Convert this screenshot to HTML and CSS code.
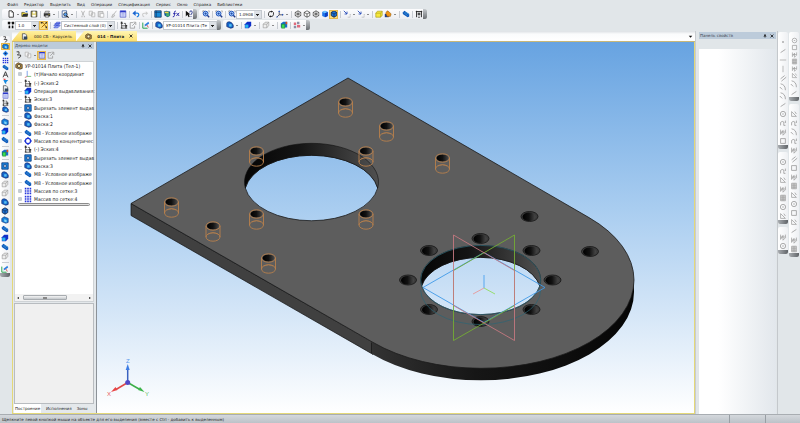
FILE: index.html
```html
<!DOCTYPE html>
<html lang="ru">

<head>
    <meta charset="UTF-8">
    <meta name="viewport" content="width=device-width, initial-scale=1.0">
    <title>014 - Плита</title>
    <link rel="stylesheet" href="styles.css">
</head>

<body>
    <!-- icon sprite -->
    <svg class="sprite" aria-hidden="true">
        <symbol id="new" viewBox="0 0 10 10"><path d="M2.5 1h3.5l2 2v6h-5.5z" fill="#fff" stroke="#222"/><path d="M6 1v2h2" fill="none" stroke="#222" stroke-width=".6"/></symbol>
        <symbol id="open" viewBox="0 0 10 10"><path d="M1 8V3h3l1 1h3v4z" fill="#e8d23c" stroke="#4a4a20" stroke-width=".8"/><path d="M1 8l2-3h6L7.500 8z" fill="#2c3038"/><path d="M5 2l3-1v2z" fill="#2a6fd0"/></symbol>
        <symbol id="save" viewBox="0 0 10 10"><path d="M1.500 1.500h7v7h-7z" fill="#d9c964" stroke="#222"/><path d="M3.500 2h3v2.500h-3zM3 6h4v2.500H3z" fill="#fff"/></symbol>
        <symbol id="print" viewBox="0 0 10 10"><path d="M1 4h8v4H1z" fill="#333"/><path d="M3 1.500h5L7 4H2zM3 6.500h4V9H3z" fill="#ddd" stroke="#333" stroke-width=".6"/><path d="M7 5h1v1H7z" fill="#d8c820"/></symbol>
        <symbol id="preview" viewBox="0 0 10 10"><path d="M1.500 1h5.500v8H1.500z" fill="#fff" stroke="#234a90" stroke-width=".9"/><path d="M6.500 7l3 2.500" stroke="#111" stroke-width="1.300"/><circle cx="5.500" cy="5.500" r="2.200" fill="#58a0f0" stroke="#111" stroke-width=".8"/></symbol>
        <symbol id="cut" viewBox="0 0 10 10"><path d="M3 1l3 6M7 1L4 7" stroke="#aaa" fill="none"/><path d="M3 7.500h1.500v1.500H3zM6 7.500h1.500v1.500H6z" fill="#bbb"/></symbol>
        <symbol id="copy" viewBox="0 0 10 10"><path d="M1.500 1.500h4v5h-4zM4.500 3.500h4v5h-4z" fill="#f5f5f5" stroke="#b0b0b0" stroke-width=".9"/></symbol>
        <symbol id="paste" viewBox="0 0 10 10"><path d="M1.500 2h6v6.500h-6z" fill="#ddd" stroke="#aaa"/><path d="M4 4.500h4.500V9H4z" fill="#fff" stroke="#aaa" stroke-width=".8"/></symbol>
        <symbol id="brush" viewBox="0 0 10 10"><path d="M8 1L5 5M2 9l2-4 2 1.500-2 2.500z" stroke="#b0b0b0" fill="#ddd"/></symbol>
        <symbol id="props" viewBox="0 0 10 10"><path d="M1.500 1h7v8h-7z" fill="#e6ecff" stroke="#3a45c0" stroke-width=".8"/><path d="M1.500 1h7v2h-7z" fill="#2b37c8"/><path d="M3 4.500h4M3 6h4M3 7.500h4" stroke="#6672d8" stroke-width=".6"/></symbol>
        <symbol id="undo" viewBox="0 0 10 10"><path d="M3 4h3.500q2 0 2 2t-2.500 2.500" fill="none" stroke="#1f7fe0" stroke-width="1.600"/><path d="M.5 4l4-3.500v7z" fill="#1a63d0"/></symbol>
        <symbol id="redo" viewBox="0 0 10 10"><path d="M7 4H4Q2 4 2 6t2 2.500" fill="none" stroke="#ccc" stroke-width="1.300"/><path d="M9 4L6 1.500v5z" fill="#ccc"/></symbol>
        <symbol id="cell" viewBox="0 0 10 10"><path d="M1 1h8v8H1z" fill="#1785e0" stroke="#123a7c"/><path d="M3.500 3.500h3v3h-3z" fill="#fff" stroke="#123a7c"/></symbol>
        <symbol id="lib" viewBox="0 0 10 10"><path d="M1 1h8v8H1z" fill="#1689d8" stroke="#1d355e"/><path d="M1 3h8M3 1v8" stroke="#113c70" stroke-width=".8"/></symbol>
        <symbol id="vars" viewBox="0 0 10 10"><path d="M1 2l3-1 5 1v5L6 9 2 7z" fill="#165a9a"/><path d="M4 4h4v4H4z" fill="#45b06a"/><path d="M2 2h5v2H2z" fill="#ead64a"/></symbol>
        <symbol id="fx" viewBox="0 0 10 10"><path d="M5 1.500H4Q3 1.500 3 3v4q0 1.500-2 1.500M1.500 4.500h3M5.500 3.500l3.500 4M9 3.500L5.500 7.500" fill="none" stroke="#2a2aa8" stroke-width="1.200"/></symbol>
        <symbol id="help" viewBox="0 0 10 10"><path d="M1 1v7l2-2 1.500 3L6 8 4.500 5.500H7z" fill="#111"/><path d="M6 3q0-2 1.500-2T9 3 7.500 5v1M7.500 7.500v1" fill="none" stroke="#2b3a90" stroke-width="1.200"/></symbol>
        <symbol id="zoom" viewBox="0 0 10 10"><path d="M1 3V1h2M8 1h1v2" fill="none" stroke="#555" stroke-width=".6"/><path d="M6 6l3 3" stroke="#223a86" stroke-width="1.800"/><circle cx="4.500" cy="4.500" r="3" fill="#9ccaff" stroke="#2454b8" stroke-width="1.200"/><path d="M3 4.500h3M4.500 3v3" stroke="#1b3b9b" stroke-width=".9"/></symbol>
        <symbol id="refresh" viewBox="0 0 10 10"><path d="M3.500 8.500Q1 7 2 4t3-2M6.500 1.500Q9 3 8 6T5 8" fill="none" stroke="#222" stroke-width="1.100"/><path d="M5 .5v3l2-1.500zM5 6.500v3L3 8z" fill="#222"/></symbol>
        <symbol id="axes" viewBox="0 0 10 10"><path d="M4 1v5L1 9M4 6h5" fill="none" stroke="#223" stroke-width=".9"/><path d="M4 .5l1.200 2H2.800zM9.500 6l-2-1.200v2.400zM.5 9.500l.5-2 1.500 1.500z" fill="#2455c0"/></symbol>
        <symbol id="wire" viewBox="0 0 10 10"><path d="M5 1l3.500 2v4L5 9 1.500 7V3zM1.500 3L5 5l3.500-2M5 5v4" fill="#fff" stroke="#222" stroke-width=".8"/></symbol>
        <symbol id="wirefull" viewBox="0 0 10 10"><path d="M5 1l3.500 2v4L5 9 1.500 7V3zM1.500 3L5 5l3.500-2M5 5v4M5 1v4L1.500 7M5 5l3.500 2" fill="#fff" stroke="#222" stroke-width=".7"/></symbol>
        <symbol id="solid" viewBox="0 0 10 10"><path d="M5 1l3.500 1.500v5L5 9 1.500 7.500v-5z" fill="#1d74ea"/><path d="M1.500 2.500L5 1l3.500 1.500L5 4z" fill="#6fc4ff"/><path d="M5 4l3.500-1.500v5L5 9z" fill="#0d3fc0"/></symbol>
        <symbol id="solidline" viewBox="0 0 10 10"><path d="M5 1l3.500 2v4L5 9 1.500 7V3z" fill="#1d74d8" stroke="#102248"/><path d="M1.500 3L5 5l3.500-2M5 5v4" fill="none" stroke="#102248" stroke-width=".8"/></symbol>
        <symbol id="part" viewBox="0 0 10 10"><path d="M1 3l3-2 5 2v5L6 9 1 7z" fill="#1580dc" stroke="#103078" stroke-width=".8"/><path d="M4 4l3 1v3L4 7z" fill="#7fd4f8"/></symbol>
        <symbol id="round" viewBox="0 0 10 10"><path d="M1 3q0-2 3-2t5 4v3L6 9 1 7z" fill="#1566cc" stroke="#10296c" stroke-width=".9"/><path d="M4 4h3v3H4z" fill="#58c4f2"/></symbol>
        <symbol id="extrude" viewBox="0 0 10 10"><path d="M1 4l3-3h5v5L6 9H1z" fill="#0f2fc8"/><path d="M1.500 4.500h4v4h-4z" fill="#29b6ee"/></symbol>
        <symbol id="thread" viewBox="0 0 10 10"><path d="M1 3l2-2 6 4v3L7 9 1 5z" fill="#0d56b8"/><path d="M2 3l5 4M4 2.500l4.500 3" stroke="#48a8e8" stroke-width=".8"/></symbol>
        <symbol id="ring" viewBox="0 0 10 10"><circle cx="5" cy="5" r="3.200" fill="none" stroke="#1d32d8" stroke-width="1.500"/><path d="M5 0v2M5 8v2M0 5h2M8 5h2" stroke="#1d32d8" stroke-width="1.300"/></symbol>
        <symbol id="grid" viewBox="0 0 10 10"><path d="M1 2h8M1 5h8M1 8h8" stroke="#2434dc" stroke-width="2" stroke-dasharray="2 1"/></symbol>
        <symbol id="sketch" viewBox="0 0 10 10"><path d="M2 1v8h7M1 3h3M5 3h2v6M2 6h6v3" fill="none" stroke="#333" stroke-width=".9"/><path d="M1 1h2v2H1zM1 8h2v1.500H1zM7 5h2v2H7z" fill="#333"/></symbol>
        <symbol id="origin" viewBox="0 0 10 10"><path d="M4 1v7" stroke="#3a70e0" stroke-width=".8"/><path d="M4 8h5" stroke="#3ba63b" stroke-width=".8"/><path d="M4 8L1 9.500" stroke="#d04040" stroke-width=".8"/></symbol>
        <symbol id="detail" viewBox="0 0 10 10"><path d="M1 3l3-2 5 2v5L6 9 1 7z" fill="#b98d3c" stroke="#3b2f20" stroke-width=".9"/><circle cx="5" cy="5" r="2" fill="#fff1b8" stroke="#333" stroke-width=".9"/></symbol>
        <symbol id="assembly" viewBox="0 0 10 10"><path d="M2 1h4l2 2v6H2z" fill="#e9edf4" stroke="#333" stroke-width=".9"/><path d="M4 5h5v4H4z" fill="#31465e"/></symbol>
        <symbol id="tangle" viewBox="0 0 10 10"><path d="M1 1h3v3H1zM6 1h3v3H6zM2 6h2v3H2zM6 6h2v3H6z" fill="#111"/><path d="M4 2h2M3 4v2M7 4v2" stroke="#444" stroke-width=".6"/></symbol>
        <symbol id="snap" viewBox="0 0 10 10"><path d="M1 2h3l4 6M2 8l6-6" stroke="#a66a00" stroke-width="1.200" fill="none"/><path d="M1 1h2v2H1zM7 7h2v2H7zM7 1h2v2H7z" fill="#333"/></symbol>
        <symbol id="layers" viewBox="0 0 10 10"><path d="M1 6l3-3h5L6 6zM1 8.500l3-3h5l-3 3zM2 4l2.500-2.500H9L7 4z" fill="#8fa4ff" stroke="#2d3fc4" stroke-width=".7"/></symbol>
        <symbol id="pencil" viewBox="0 0 10 10"><path d="M1 2v7h6" fill="none" stroke="#23a04c" stroke-width="1.200"/><path d="M3 7l1-3 4-3 1 2-4 3z" fill="#2c7de0"/><path d="M6 5l2 3" stroke="#d03030"/></symbol>
        <symbol id="ghost" viewBox="0 0 10 10"><path d="M1.500 4l2.500-2.500h4.500v4L6 8.500H1.500zM1.500 4H6v4.500M6 4l2.500-2.500" fill="#eee" stroke="#999" stroke-width=".8"/></symbol>
        <symbol id="ghostdoc" viewBox="0 0 10 10"><path d="M5 2H1.500v7H7V6M4 6l4-4M5.500 1.500H8.500V5" fill="none" stroke="#999"/></symbol>
        <symbol id="arrowline" viewBox="0 0 10 10"><path d="M1 1l4 4M5 2v3H2" fill="none" stroke="#254ab8" stroke-width="1.100"/><path d="M6 9h3V5" fill="none" stroke="#777" stroke-width=".7" stroke-dasharray="1 1"/></symbol>
        <symbol id="yellow" viewBox="0 0 10 10"><path d="M1 4l2-2.500h6v5L7 9H1z" fill="#f6e83c" stroke="#a99a18" stroke-width=".8"/><path d="M1 4h6v5M7 4l2-2.500" fill="none" stroke="#a99a18" stroke-width=".7"/></symbol>
        <symbol id="section" viewBox="0 0 10 10"><path d="M1 5h5v4H1z" fill="#223e8c"/><path d="M2 4l2-3 2 1 3 3-1 3H4z" fill="#f09418" stroke="#6e4408" stroke-width=".5"/></symbol>
        <symbol id="frame" viewBox="0 0 10 10"><path d="M1 2h8M2 1v8M8 1v8M4 4h2v2H4zM4 9h2" fill="none" stroke="#222" stroke-width="1.200"/></symbol>
        <symbol id="greenpart" viewBox="0 0 10 10"><path d="M1 3l3-2h5v7H1z" fill="#1870c8"/><path d="M2 4h4v5H2z" fill="#38e050" stroke="#1b6b2b" stroke-width=".6"/><path d="M7 1h2v3H7z" fill="#e05020"/></symbol>
        <symbol id="redblue" viewBox="0 0 10 10"><path d="M1 2h3v3H1zM5 5h4v3H5z" fill="#e06a7c"/><path d="M5 1h3v3H5zM1 6h3v3H1z" fill="#8a8ea4"/></symbol>
        <symbol id="curve" viewBox="0 0 10 10"><path d="M2 1h3v2L3 5h4v2L4 9" fill="none" stroke="#333" stroke-width="1.100"/></symbol>
        <symbol id="cross" viewBox="0 0 10 10"><path d="M5 1l4 4-4 4-4-4z" fill="#2f8df0"/><circle cx="5" cy="5" r="1.500" fill="#10256c"/></symbol>
        <symbol id="letter" viewBox="0 0 10 10"><path d="M1.500 9L5 1l3.500 8M3 6h4" fill="none" stroke="#333" stroke-width="1.300"/></symbol>
        <symbol id="funnel" viewBox="0 0 10 10"><path d="M1 1h4v3z" fill="#e04040"/><path d="M2 3h7L6 6v3L4 7z" fill="#1689e0"/></symbol>
        <symbol id="g-dot" viewBox="0 0 10 10"><path d="M4 4h2v2H4z" fill="#999"/></symbol>
        <symbol id="g-line" viewBox="0 0 10 10"><path d="M2 7l6-4" stroke="#999"/></symbol>
        <symbol id="g-horz" viewBox="0 0 10 10"><path d="M1 5h8" stroke="#aaa"/></symbol>
        <symbol id="g-vert" viewBox="0 0 10 10"><path d="M5 1v8" stroke="#aaa"/></symbol>
        <symbol id="g-par" viewBox="0 0 10 10"><path d="M2 6l5-4M3 9l6-5" stroke="#999"/></symbol>
        <symbol id="g-arc" viewBox="0 0 10 10"><path d="M2 1q6 1 6 8M1 5l3 3" fill="none" stroke="#999"/></symbol>
        <symbol id="g-circ" viewBox="0 0 10 10"><circle cx="5" cy="5" r="3.300" fill="none" stroke="#999"/><path d="M4 5h2" stroke="#999"/></symbol>
        <symbol id="g-wave" viewBox="0 0 10 10"><path d="M2 8q-1-5 2-5t2 3 2 2M8 2v3" fill="none" stroke="#999"/></symbol>
        <symbol id="g-rect" viewBox="0 0 10 10"><path d="M2 2h6v6H2z" fill="none" stroke="#999"/></symbol>
        <symbol id="g-zig" viewBox="0 0 10 10"><path d="M2 2v6l3-5v6l3-3V2M2 5h6" fill="none" stroke="#999" stroke-width=".9"/></symbol>
        <symbol id="g-tri" viewBox="0 0 10 10"><path d="M2 2v6h6zM6 2l2 3" fill="none" stroke="#999" stroke-width=".9"/></symbol>
        <symbol id="g-table" viewBox="0 0 10 10"><path d="M2 1.500h6v7H2zM2 4h6M2 6.500h6M4 1.500v7M6 1.500v7" fill="#ddd" stroke="#999" stroke-width=".8"/></symbol>
        <symbol id="pin" viewBox="0 0 10 10"><path d="M3 1h4v4h1.500v1.500h-7V5H3zM4.500 6.500h1V10h-1z" fill="#111"/></symbol>
        <symbol id="x" viewBox="0 0 10 10"><path d="M1.500 1.500l7 7M8.500 1.500l-7 7" stroke="#111" stroke-width="2"/></symbol>
        <symbol id="down" viewBox="0 0 10 10"><path d="M1.500 3.500h7L5 7.500z" fill="#111"/></symbol>
    </svg>

    <header class="top">
        <nav class="menu">
            <a href="#">Файл</a>
            <a href="#">Редактор</a>
            <a href="#">Выделить</a>
            <a href="#">Вид</a>
            <a href="#">Операции</a>
            <a href="#">Спецификация</a>
            <a href="#">Сервис</a>
            <a href="#">Окно</a>
            <a href="#">Справка</a>
            <a href="#">Библиотеки</a>
        </nav>
        <div class="bars">
            <div class="bar">
                <button class="tool" aria-label="Создать"><svg><use href="#new"/></svg></button>
                <button class="more" aria-label="Ещё"></button>
                <button class="tool" aria-label="Открыть"><svg><use href="#open"/></svg></button>
                <button class="tool" aria-label="Сохранить"><svg><use href="#save"/></svg></button>
                <i class="sep"></i>
                <button class="tool" aria-label="Печать"><svg><use href="#print"/></svg></button>
                <button class="more" aria-label="Ещё"></button>
                <i class="sep"></i>
                <button class="tool" aria-label="Просмотр"><svg><use href="#preview"/></svg></button>
                <button class="more" aria-label="Ещё"></button>
                <i class="sep"></i>
                <button class="tool" aria-label="Вырезать"><svg><use href="#cut"/></svg></button>
                <button class="tool" aria-label="Копировать"><svg><use href="#copy"/></svg></button>
                <button class="tool" aria-label="Вставить"><svg><use href="#paste"/></svg></button>
                <i class="sep"></i>
                <button class="tool" aria-label="Копировать свойства"><svg><use href="#brush"/></svg></button>
                <button class="tool" aria-label="Свойства"><svg><use href="#props"/></svg></button>
                <i class="sep"></i>
                <button class="tool" aria-label="Отменить"><svg><use href="#undo"/></svg></button>
                <button class="tool" aria-label="Повторить"><svg><use href="#redo"/></svg></button>
                <i class="sep"></i>
                <button class="tool" aria-label="Менеджер библиотек"><svg><use href="#lib"/></svg></button>
                <button class="tool" aria-label="Менеджер документа"><svg><use href="#vars"/></svg></button>
                <button class="tool" aria-label="Переменные"><svg><use href="#fx"/></svg></button>
                <i class="sep"></i>
                <button class="tool" aria-label="Справка"><svg><use href="#help"/></svg></button>
                <i class="end"></i>
            </div>
            <div class="bar">
                <button class="tool" aria-label="Увеличить рамкой"><svg><use href="#zoom"/></svg></button>
                <i class="sep"></i>
                <button class="tool" aria-label="Показать все"><svg><use href="#zoom"/></svg></button>
                <i class="sep"></i>
                <button class="tool" aria-label="Масштаб"><svg><use href="#zoom"/></svg></button>
                <select class="pick scale" aria-label="Текущий масштаб"><option>1.0908</option></select>
                <i class="sep"></i>
                <button class="tool" aria-label="Повернуть"><svg><use href="#refresh"/></svg></button>
                <button class="tool" aria-label="Ориентация"><svg><use href="#axes"/></svg></button>
                <button class="more" aria-label="Ещё"></button>
                <i class="sep"></i>
                <button class="tool" aria-label="Каркас"><svg><use href="#wirefull"/></svg></button>
                <button class="tool" aria-label="Без невидимых линий"><svg><use href="#wire"/></svg></button>
                <button class="tool" aria-label="Невидимые линии тонкие"><svg><use href="#wirefull"/></svg></button>
                <button class="tool" aria-label="Полутоновое"><svg><use href="#solid"/></svg></button>
                <button class="tool active" aria-label="Полутоновое с каркасом"><svg><use href="#solidline"/></svg></button>
                <i class="sep"></i>
                <button class="tool" aria-label="Скрыть"><svg><use href="#arrowline"/></svg></button>
                <button class="more" aria-label="Ещё"></button>
                <button class="tool" aria-label="Показать"><svg><use href="#arrowline"/></svg></button>
                <button class="more" aria-label="Ещё"></button>
                <i class="sep"></i>
                <button class="tool" aria-label="Упрощенное отображение"><svg><use href="#yellow"/></svg></button>
                <button class="tool" aria-label="Сечение"><svg><use href="#section"/></svg></button>
                <button class="more" aria-label="Ещё"></button>
                <i class="sep"></i>
                <button class="tool" aria-label="Перестроить"><svg><use href="#thread"/></svg></button>
                <i class="sep"></i>
                <button class="tool" aria-label="Размеры"><svg><use href="#frame"/></svg></button>
                <i class="end"></i>
            </div>
        </div>
        <div class="bars">
            <div class="bar">
                <button class="tool" aria-label="Шаг курсора"><svg><use href="#tangle"/></svg></button>
                <select class="pick step" aria-label="Шаг"><option>1.0</option></select>
                <button class="tool active" aria-label="Привязки"><svg><use href="#snap"/></svg></button>
                <i class="sep"></i>
                <button class="tool" aria-label="Слои"><svg><use href="#layers"/></svg></button>
                <select class="pick layer" aria-label="Слой"><option>Системный слой (0)</option></select>
                <i class="sep"></i>
                <button class="tool" aria-label="Эскиз"><svg><use href="#sketch"/></svg></button>
                <button class="tool" aria-label="Эскиз из библиотеки"><svg><use href="#ghostdoc"/></svg></button>
                <i class="sep"></i>
                <button class="tool" aria-label="Редактировать"><svg><use href="#pencil"/></svg></button>
                <i class="sep"></i>
                <button class="tool" aria-label="Деталь"><svg><use href="#round"/></svg></button>
                <select class="pick layer" aria-label="Исполнение"><option>УР-01014 Плита (Те</option></select>
                <i class="end"></i>
            </div>
            <div class="bar">
                <button class="tool" aria-label="Тело"><svg><use href="#round"/></svg></button>
                <button class="more" aria-label="Ещё"></button>
                <i class="sep"></i>
                <button class="tool" aria-label="Выдавить"><svg><use href="#extrude"/></svg></button>
                <button class="more" aria-label="Ещё"></button>
                <i class="sep"></i>
                <button class="tool" aria-label="Поверхность"><svg><use href="#ghost"/></svg></button>
                <button class="more" aria-label="Ещё"></button>
                <i class="sep"></i>
                <button class="tool" aria-label="Листовое тело"><svg><use href="#greenpart"/></svg></button>
                <i class="sep"></i>
                <button class="tool" aria-label="Массив"><svg><use href="#redblue"/></svg></button>
                <button class="more" aria-label="Ещё"></button>
                <i class="end"></i>
            </div>
        </div>
    </header>

    <main class="work">
        <aside class="side">
            <div class="rail">
                <button class="tool" aria-label="Кривые"><svg><use href="#curve"/></svg></button>
                <button class="tool active" aria-label="Деталь"><svg><use href="#part"/></svg></button>
                <button class="tool" aria-label="Точки"><svg><use href="#cross"/></svg></button>
                <button class="tool" aria-label="Массивы"><svg><use href="#grid"/></svg></button>
                <button class="tool" aria-label="Оси"><svg><use href="#thread"/></svg></button>
                <button class="tool" aria-label="Обозначения"><svg><use href="#letter"/></svg></button>
                <button class="tool" aria-label="Фильтры"><svg><use href="#funnel"/></svg></button>
                <button class="tool" aria-label="Спецификация"><svg><use href="#assembly"/></svg></button>
                <button class="tool" aria-label="Отчеты"><svg><use href="#props"/></svg></button>
                <button class="tool" aria-label="Измерения"><svg><use href="#sketch"/></svg></button>
                <button class="tool" aria-label="Листовое тело"><svg><use href="#round"/></svg></button>
                <i class="sep"></i>
                <button class="tool big" aria-label="Выдавливание"><svg><use href="#part"/></svg></button>
                <button class="tool big" aria-label="Вращение"><svg><use href="#extrude"/></svg></button>
                <button class="tool big" aria-label="По сечениям"><svg><use href="#thread"/></svg></button>
                <i class="sep"></i>
                <button class="tool big" aria-label="Деталь-заготовка"><svg><use href="#greenpart"/></svg></button>
                <i class="sep"></i>
                <button class="tool big" aria-label="Вырезать"><svg><use href="#cell"/></svg></button>
                <button class="tool big" aria-label="Скругление"><svg><use href="#round"/></svg></button>
                <button class="tool big" aria-label="Отверстие"><svg><use href="#ghost"/></svg></button>
                <button class="tool big" aria-label="Ребро"><svg><use href="#ghost"/></svg></button>
                <button class="tool big" aria-label="Уклон"><svg><use href="#round"/></svg></button>
                <button class="tool big" aria-label="Оболочка"><svg><use href="#solidline"/></svg></button>
                <button class="tool big" aria-label="Сечение"><svg><use href="#part"/></svg></button>
                <button class="tool big" aria-label="Резьба"><svg><use href="#thread"/></svg></button>
                <button class="tool big" aria-label="Масштабирование"><svg><use href="#extrude"/></svg></button>
                <button class="tool big" aria-label="Массив"><svg><use href="#thread"/></svg></button>
                <button class="tool big" aria-label="Булева операция"><svg><use href="#ghost"/></svg></button>
                <i class="sep"></i>
                <button class="tool big" aria-label="Зеркало"><svg><use href="#pencil"/></svg></button>
                <i class="end"></i>
            </div>
        </aside>

        <section class="doc">
            <div class="tabs">
                <a class="tab" href="#"><svg><use href="#assembly"/></svg>000 СБ - Карусель</a>
                <a class="tab current" href="#"><svg><use href="#detail"/></svg>014 - Плита<svg class="close"><use href="#x"/></svg></a>
                <button class="list" aria-label="Список окон"><svg><use href="#down"/></svg></button>
            </div>
            <div class="doc-body">
                <div class="tree">
                    <div class="caption">Дерево модели<svg><use href="#pin"/></svg><svg><use href="#x"/></svg></div>
                    <div class="tree-tools">
                        <button class="tool" aria-label="Состав"><svg><use href="#curve"/></svg></button>
                        <button class="tool" aria-label="Структура"><svg><use href="#copy"/></svg></button>
                        <button class="more" aria-label="Ещё"></button>
                        <button class="tool active" aria-label="Отношения"><svg><use href="#props"/></svg></button>
                        <button class="tool" aria-label="Дополнительно"><svg><use href="#ghostdoc"/></svg></button>
                    </div>
                    <div class="tree-list">
                        <ul>
                            <li class="root"><svg><use href="#detail"/></svg>УР-01014 Плита (Тел-1)</li>
                            <li class="fold"><svg><use href="#origin"/></svg>(т)Начало координат</li>
                            <li><svg><use href="#sketch"/></svg>(-) Эскиз:2</li>
                            <li><svg><use href="#extrude"/></svg>Операция выдавливания:</li>
                            <li><svg><use href="#sketch"/></svg>Эскиз:3</li>
                            <li><svg><use href="#cell"/></svg>Вырезать элемент выдав</li>
                            <li><svg><use href="#round"/></svg>Фаска:1</li>
                            <li><svg><use href="#round"/></svg>Фаска:2</li>
                            <li><svg><use href="#thread"/></svg>М8 - Условное изображе</li>
                            <li class="fold"><svg><use href="#ring"/></svg>Массив по концентричес</li>
                            <li><svg><use href="#sketch"/></svg>(-) Эскиз:4</li>
                            <li><svg><use href="#cell"/></svg>Вырезать элемент выдав</li>
                            <li><svg><use href="#round"/></svg>Фаска:3</li>
                            <li><svg><use href="#thread"/></svg>М8 - Условное изображе</li>
                            <li><svg><use href="#thread"/></svg>М8 - Условное изображе</li>
                            <li class="fold"><svg><use href="#grid"/></svg>Массив по сетке:3</li>
                            <li class="fold"><svg><use href="#grid"/></svg>Массив по сетке:4</li>
                        </ul>
                        <div class="marker"></div>
                        <div class="scroll"><i class="left"></i><span class="thumb"></span><i class="right"></i></div>
                    </div>
                    <div class="tree-extra"></div>
                    <div class="tree-tabs">
                        <a class="on" href="#">Построение</a>
                        <a href="#">Исполнения</a>
                        <a href="#">Зоны</a>
                    </div>
                </div>

                <div class="view">
                    <svg class="scene" viewBox="97 42 597 371" role="img" aria-label="Плита">
                        <defs>
                            <linearGradient id="edge" gradientUnits="userSpaceOnUse" x1="370" y1="0" x2="634" y2="0">
                                <stop offset="0" stop-color="#333"/>
                                <stop offset=".4" stop-color="#161616"/>
                                <stop offset="1" stop-color="#060606"/>
                            </linearGradient>
                            <linearGradient id="wall">
                                <stop offset="0" stop-color="#050505"/>
                                <stop offset=".4" stop-color="#141414"/>
                                <stop offset="1" stop-color="#505050"/>
                            </linearGradient>
                            <linearGradient id="bore">
                                <stop offset="0" stop-color="#000"/>
                                <stop offset=".5" stop-color="#111"/>
                                <stop offset="1" stop-color="#484848"/>
                            </linearGradient>
                            <!-- chamfered through hole -->
                            <g id="hole">
                                <ellipse rx="8.500" ry="5" fill="#3b3b3b" stroke="#151515" stroke-width=".8"/>
                                <ellipse cx="-.5" cy=".3" rx="6.500" ry="4.300" fill="url(#bore)"/>
                            </g>
                            <!-- threaded hole with its thread outline -->
                            <g id="threaded">
                                <ellipse rx="6" ry="3.500" fill="url(#bore)"/>
                                <g fill="none" stroke="#b8804c" stroke-width=".9">
                                    <ellipse rx="7" ry="4.200"/>
                                    <ellipse cy="11" rx="7" ry="4.200"/>
                                    <path d="M-7 0v11M7 0v11"/>
                                    <path d="M-5 8q5-3 10 0" opacity=".6"/>
                                </g>
                            </g>
                        </defs>

                        <path fill="#404040" stroke="#111" stroke-width=".7" d="M131 203.500L373 342.400V354.400L131 215.500z"/>
                        <path fill="url(#edge)" d="M372 341A153 88.300 0 0 0 481 367A153 88.300 0 0 0 634 279V292A153 88.300 0 0 1 481 380.300A153 88.300 0 0 1 372 354z"/>
                        <path fill="#5d5d5d" stroke="#1a1a1a" stroke-width=".8" fill-rule="evenodd" d="M348 78L589 217.600A153 88.300 0 0 1 634 280A153 88.300 0 0 1 481 368.300A153 88.300 0 0 1 373 342.400L131 203.500z
                            M245.300 188A67 38.700 0 0 1 377.700 188A67 38.700 0 0 1 245.300 188z
                            M421.600 286A60 34.600 0 0 1 539.800 286A60 34.600 0 0 1 421.600 286z"/>
                        <path fill="url(#wall)" stroke="#111" stroke-width=".6" d="M245.300 188A67 38.700 0 1 1 377.700 188A67 38.700 0 0 0 245.300 188z"/>
                        <path fill="url(#wall)" stroke="#111" stroke-width=".6" d="M421.600 286A60 34.600 0 1 1 539.800 286A60 34.600 0 0 0 421.600 286z"/>

                        <use href="#hole" x="529.500" y="216.500"/>
                        <use href="#hole" x="480.500" y="238.500"/>
                        <use href="#hole" x="429" y="250.500"/>
                        <use href="#hole" x="531.500" y="250.500"/>
                        <use href="#hole" x="590" y="251.500"/>
                        <use href="#hole" x="408" y="280"/>
                        <use href="#hole" x="552.500" y="280"/>
                        <use href="#hole" x="429" y="309.500"/>
                        <use href="#hole" x="531.500" y="309.500"/>
                        <use href="#hole" x="480.500" y="321.500"/>

                        <use href="#threaded" x="345.500" y="102"/>
                        <use href="#threaded" x="386.500" y="126"/>
                        <use href="#threaded" x="442.500" y="158"/>
                        <use href="#threaded" x="256.500" y="151"/>
                        <use href="#threaded" x="366" y="151"/>
                        <use href="#threaded" x="171.500" y="202"/>
                        <use href="#threaded" x="213" y="226"/>
                        <use href="#threaded" x="256.500" y="214"/>
                        <use href="#threaded" x="366" y="214"/>
                        <use href="#threaded" x="268.500" y="258"/>

                        <!-- base planes and origin -->
                        <g fill="none" stroke-width=".9">
                            <ellipse cx="480.700" cy="280" rx="60" ry="34.600" stroke="#2c6474" stroke-width=".7"/>
                            <path d="M420.700 290A60 34.600 0 0 0 540.700 290" stroke="#2c6474" stroke-width=".7"/>
                            <path d="M423 287.500L484 252.500L545 287.500L484 322.500z" stroke="#3f9ae8"/>
                            <path d="M514.500 235V305.500L453.500 340.500V270.500z" stroke="#74ac34"/>
                            <path d="M453.500 235L514.500 270.500V340.500L453.500 305.500z" stroke="#c47880"/>
                            <path d="M484 288V275" stroke="#4aa2f0"/>
                            <path d="M484 288L473 294" stroke="#e89898"/>
                            <path d="M484 288L495 294" stroke="#90dc60"/>
                        </g>
                        <path d="M371.500 342.500V353" stroke="#111" stroke-width=".7"/>

                        <!-- orientation triad -->
                        <g stroke-width="1.500" fill="none">
                            <path d="M127.700 382V369" stroke="#3a62c0"/>
                            <path d="M127.700 382.500L116 389.500" stroke="#e04848"/>
                            <path d="M127.700 382.500L139 389" stroke="#3cae48"/>
                        </g>
                        <path d="M127.700 364l2 6h-4z" fill="#3c7ce4"/>
                        <path d="M111 392l4.500-5 2 3z" fill="#e84444"/>
                        <path d="M144.500 392l-6.500-2 2-3z" fill="#3cb44a"/>
                        <circle cx="127.700" cy="382.500" r="2.500" fill="#5048c8"/>
                        <text class="axis z" x="126" y="363">Z</text>
                        <text class="axis x" x="107" y="396">X</text>
                        <text class="axis y" x="145" y="396">Y</text>
                    </svg>
                </div>
            </div>
        </section>

        <section class="properties">
            <div class="caption">Панель свойств<svg><use href="#pin"/></svg><svg><use href="#x"/></svg></div>
            <div class="sheet"></div>
        </section>

        <aside class="right">
            <div class="column">
                <div class="rail">
                    <button class="tool big" aria-label="Точка"><svg><use href="#g-dot"/></svg></button>
                    <button class="tool big" aria-label="Отрезок"><svg><use href="#g-line"/></svg></button>
                    <button class="tool big" aria-label="Горизонтальная прямая"><svg><use href="#g-horz"/></svg></button>
                    <button class="tool big" aria-label="Вертикальная прямая"><svg><use href="#g-vert"/></svg></button>
                    <button class="tool big" aria-label="Параллельная прямая"><svg><use href="#g-par"/></svg></button>
                    <button class="tool big" aria-label="Дуга"><svg><use href="#g-arc"/></svg></button>
                    <button class="tool big" aria-label="Дуга по точкам"><svg><use href="#g-arc"/></svg></button>
                    <button class="tool big" aria-label="Касательная"><svg><use href="#g-line"/></svg></button>
                    <button class="tool big" aria-label="Окружность"><svg><use href="#g-circ"/></svg></button>
                    <button class="tool big" aria-label="Кривая"><svg><use href="#g-wave"/></svg></button>
                    <button class="tool big" aria-label="Ломаная"><svg><use href="#g-zig"/></svg></button>
                    <button class="tool big" aria-label="Прямоугольник"><svg><use href="#g-rect"/></svg></button>
                    <i class="end"></i>
                </div>
                <div class="rail">
                    <button class="tool big" aria-label="Массив по окружности"><svg><use href="#g-circ"/></svg></button>
                    <button class="tool big" aria-label="Копия"><svg><use href="#g-wave"/></svg></button>
                    <button class="tool big" aria-label="Поворот"><svg><use href="#g-tri"/></svg></button>
                    <button class="tool big" aria-label="Симметрия"><svg><use href="#g-zig"/></svg></button>
                    <button class="tool big" aria-label="Масштаб"><svg><use href="#g-table"/></svg></button>
                    <button class="tool big" aria-label="Сдвиг"><svg><use href="#g-circ"/></svg></button>
                    <button class="tool big" aria-label="Усечь"><svg><use href="#g-tri"/></svg></button>
                    <i class="end"></i>
                </div>
                <div class="rail">
                    <button class="tool big" aria-label="Сборка"><svg><use href="#g-zig"/></svg></button>
                    <button class="tool big" aria-label="Тело"><svg><use href="#g-circ"/></svg></button>
                    <i class="end"></i>
                </div>
            </div>
            <div class="column">
                <div class="rail">
                    <button class="tool" aria-label="Диаметр"><svg><use href="#g-circ"/></svg></button>
                    <button class="tool" aria-label="Рамка"><svg><use href="#g-rect"/></svg></button>
                    <button class="tool" aria-label="База"><svg><use href="#g-zig"/></svg></button>
                    <button class="tool" aria-label="Сетка"><svg><use href="#g-table"/></svg></button>
                    <button class="tool" aria-label="Ось"><svg><use href="#g-zig"/></svg></button>
                    <button class="tool" aria-label="Выноска"><svg><use href="#g-tri"/></svg></button>
                    <button class="tool big" aria-label="Стрелка"><svg><use href="#g-arc"/></svg></button>
                    <button class="tool big" aria-label="Линия"><svg><use href="#g-line"/></svg></button>
                    <i class="end"></i>
                </div>
                <div class="rail">
                    <button class="tool big" aria-label="Шероховатость"><svg><use href="#g-tri"/></svg></button>
                    <button class="tool big" aria-label="Клеймо"><svg><use href="#g-wave"/></svg></button>
                    <button class="tool big" aria-label="Маркировка"><svg><use href="#g-arc"/></svg></button>
                    <button class="tool big" aria-label="Позиция"><svg><use href="#g-wave"/></svg></button>
                    <button class="tool big" aria-label="Допуск"><svg><use href="#g-zig"/></svg></button>
                    <button class="tool big" aria-label="Знак"><svg><use href="#g-par"/></svg></button>
                    <button class="tool big" aria-label="Сечение"><svg><use href="#g-rect"/></svg></button>
                    <button class="tool big" aria-label="Разрез"><svg><use href="#g-zig"/></svg></button>
                    <button class="tool big" aria-label="Размер"><svg><use href="#g-table"/></svg></button>
                    <button class="tool big" aria-label="Авторазмер"><svg><use href="#g-tri"/></svg></button>
                    <button class="tool big" aria-label="Дуговой размер"><svg><use href="#g-circ"/></svg></button>
                    <button class="tool big" aria-label="Угловой размер"><svg><use href="#g-rect"/></svg></button>
                    <button class="tool big" aria-label="Линия-выноска"><svg><use href="#g-tri"/></svg></button>
                    <button class="tool big" aria-label="Осевая"><svg><use href="#g-line"/></svg></button>
                    <button class="tool big" aria-label="Текст"><svg><use href="#g-zig"/></svg></button>
                    <button class="tool big" aria-label="Таблица"><svg><use href="#g-table"/></svg></button>
                    <i class="end"></i>
                </div>
            </div>
        </aside>
    </main>

    <footer class="status">
        <span class="hint">Щелкните левой кнопкой мыши на объекте для его выделения (вместе с Ctrl - добавить к выделенным)</span>
        <span class="slot"></span>
        <span class="slot last"></span>
    </footer>
</body>

</html>
```
FILE: styles.css
```css
* {
    box-sizing: border-box;
}

body {
    margin: 0;
    height: 100vh;
    display: flex;
    flex-direction: column;
    overflow: hidden;
    background-color: #e1e6e9;
    color: #222;
    font-family: "DejaVu Sans", "Open Sans", sans-serif;
    font-size: 4px;
    line-height: 9px;
}

.sprite {
    display: none;
}

a {
    color: inherit;
    text-decoration: none;
}

button {
    border: 0;
    padding: 0;
    background: none;
}

/* menu and toolbars */

.top {
    flex: none;
    height: 31px;
}

.menu {
    display: flex;
    gap: 6px;
    height: 9px;
    padding-left: 7px;
}

.bars {
    display: flex;
    gap: 2px;
    height: 11px;
    padding: 0 2px;
}

.bar {
    display: flex;
    align-items: center;
    height: 10px;
    padding-left: 4px;
    border-radius: 2px;
    background: linear-gradient(#fdfdfe, #eceef2);
}

.bar + .bar {
    padding-left: 2px;
}

.tool {
    flex: none;
    display: flex;
    align-items: center;
    justify-content: center;
    width: 9px;
    height: 9px;
}

.tool svg {
    width: 8px;
    height: 8px;
}

.tool.active {
    background-color: #ffdf7a;
    outline: 1px solid #e8b84a;
    outline-offset: -1px;
}

.more {
    flex: none;
    width: 5px;
    height: 9px;
    display: flex;
    align-items: center;
    justify-content: center;
}

.more::before {
    content: "";
    border: 1px solid transparent;
    border-top-color: #222;
    border-bottom: 0;
}

.sep {
    flex: none;
    width: 4px;
    height: 7px;
    background: linear-gradient(#c8ccd2, #c8ccd2) center / 1px 100% no-repeat;
}

.end {
    flex: none;
    width: 4px;
    height: 10px;
    border-radius: 0 2px 2px 0;
    background: linear-gradient(#c4c8cc, #6c7074);
}

.pick {
    appearance: none;
    flex: none;
    height: 9px;
    padding: 0 7px 0 2px;
    border: 1px solid #c3c8ce;
    border-radius: 0;
    background: linear-gradient(#222, #222) right 2px top 3px / 3px 1px no-repeat,
        linear-gradient(#222, #222) right 3px top 4px / 1px 1px no-repeat,
        linear-gradient(#dde1e6, #dde1e6) right center / 7px 100% no-repeat, #fff;
    color: #222;
    font: inherit;
    line-height: 7px;
}

.scale {
    width: 26px;
}

.step {
    width: 24px;
}

.layer {
    width: 54px;
}

/* work area */

.work {
    flex: 1;
    min-height: 0;
    display: grid;
    grid-template-columns: 12px 1fr 80px 22px;
}

.side {
    padding-top: 5px;
}

.rail {
    display: flex;
    flex-direction: column;
    align-items: center;
    width: 10px;
    border-radius: 2px;
    background: linear-gradient(90deg, #fff, #eef0f3);
}

.rail .tool {
    height: 7px;
}

.rail .tool svg {
    width: 7px;
    height: 7px;
}

.rail .big {
    height: 9px;
}

.rail .big svg {
    width: 8px;
    height: 8px;
}

.rail .sep {
    width: 7px;
    height: 4px;
    background: linear-gradient(#c8ccd2, #c8ccd2) center / 100% 1px no-repeat;
}

.rail .end {
    width: 10px;
    height: 4px;
    border-radius: 0 0 2px 2px;
    background: linear-gradient(90deg, #a8acb0, #606468);
}

.doc {
    display: flex;
    flex-direction: column;
    min-width: 0;
    min-height: 0;
    margin-right: 2px;
    border-right: 1px solid #c8ccd0;
}

.tabs {
    flex: none;
    display: flex;
    height: 11px;
    border-bottom: 1px solid #c9b878;
    background: linear-gradient(#dce0e4, #fafbfc 3px, #fff);
}

.tab {
    display: flex;
    align-items: center;
    gap: 6px;
    height: 10px;
    padding: 0 4px 0 9px;
    clip-path: polygon(8px 0, 100% 0, 100% 100%, 0 100%);
    background: linear-gradient(#fff0a0, #f8d860);
}

.tab svg {
    flex: none;
    width: 7px;
    height: 7px;
}

.tab.current {
    gap: 5px;
    font-weight: bold;
    background: linear-gradient(#fff5b4, #fbe070);
}

.tab .close {
    width: 4px;
    height: 4px;
}

.list {
    margin-left: auto;
    padding: 0 2px;
}

.list svg {
    display: block;
    width: 5px;
    height: 5px;
}

.doc-body {
    flex: 1;
    min-height: 0;
    display: grid;
    grid-template-columns: 84px 1fr;
    border: solid #e4d878;
    border-width: 0 1px 1px;
}

.tree {
    display: flex;
    flex-direction: column;
    min-width: 0;
    min-height: 0;
    padding: 0 2px 0 1px;
    border-right: 1px solid #8c9298;
    background-color: #e4e8eb;
}

.caption {
    flex: none;
    display: flex;
    align-items: center;
    gap: 3px;
    height: 7px;
    padding: 0 2px 0 1px;
    background-color: #bccbda;
    color: #3c4650;
    line-height: 7px;
}

.caption svg {
    width: 4px;
    height: 4px;
}

.caption svg:first-of-type {
    margin-left: auto;
}

.tree-tools {
    flex: none;
    display: flex;
    align-items: center;
    height: 12px;
}

.tree-list {
    flex: none;
    display: flex;
    flex-direction: column;
    height: 241px;
    border: 1px solid #cfd3d6;
    background-color: #fff;
    font-family: "DejaVu Sans Condensed", "Open Sans", sans-serif;
    font-size: 5px;
    line-height: 8px;
}

.tree-list ul {
    display: grid;
    grid-auto-rows: 8px 8px 9px;
    margin: 0;
    padding: 0;
    list-style: none;
}

.tree-list li {
    display: flex;
    align-items: center;
    gap: 2px;
    white-space: nowrap;
}

.tree-list li::before {
    content: "";
    flex: none;
    width: 4px;
    margin-left: 3px;
    border-top: 1px solid #d8d8d8;
}

.tree-list li.fold::before {
    height: 4px;
    border-radius: 1px;
    border: 0;
    background-color: #c4ccd4;
}

.tree-list li.root::before {
    display: none;
}

.tree-list li svg {
    flex: none;
    width: 8px;
    height: 8px;
}

.marker {
    flex: none;
    width: 72px;
    height: 3px;
    margin-left: 3px;
    border: 1px solid #8c8c8c;
    border-radius: 2px;
    background-color: #e0e0e0;
}

.scroll {
    display: flex;
    align-items: center;
    gap: 4px;
    height: 7px;
    margin-top: auto;
    padding: 0 2px;
    background-color: #f2f2f2;
}

.scroll .left,
.scroll .right {
    border: 1px solid transparent;
}

.scroll .left {
    border-right: 2px solid #222;
    border-left: 0;
}

.scroll .right {
    margin-left: auto;
    border-left: 2px solid #222;
    border-right: 0;
}

.thumb {
    width: 60%;
    height: 5px;
    border: 1px solid #a8acb0;
    border-radius: 1px;
    background: linear-gradient(#888, #888) center / 4px 2px no-repeat, linear-gradient(#f4f4f4, #c4c8cc);
}

.tree-extra {
    flex: 1;
    margin-top: 1px;
    border: 1px solid #b8bcc0;
    background-color: #f0f0f0;
}

.tree-tabs {
    flex: none;
    display: flex;
    gap: 5px;
    height: 9px;
}

.tree-tabs .on {
    padding: 0 1px;
    background-color: #fff;
}

.view {
    min-width: 0;
    min-height: 0;
    background: linear-gradient(#67a3e1, #a9cdf0 45%, #d3e5f7 72%, #fff);
}

.scene {
    display: block;
    width: 100%;
    height: 100%;
}

.axis {
    font-family: "Liberation Sans", sans-serif;
    font-size: 6px;
}

.axis.x {
    fill: #e86060;
}

.axis.y {
    fill: #58c060;
}

.axis.z {
    fill: #5c98ec;
}

.properties {
    display: flex;
    flex-direction: column;
    padding: 1px 1px 0;
    border-right: 1px solid #c4c8cc;
}

.sheet {
    flex: 1;
    margin-top: 10px;
    background: linear-gradient(90deg, #fff 25%, #e2e7ec);
}

.right {
    display: flex;
    gap: 1px;
}

.column {
    display: flex;
    flex-direction: column;
    gap: 3px;
    padding-top: 1px;
}

.right .rail {
    padding-top: 5px;
}

/* status bar */

.status {
    flex: none;
    display: grid;
    grid-template-columns: 1fr 36px 35px;
    height: 9px;
    border-top: 1px solid #a8adb2;
    background: linear-gradient(#d4d8dc, #bcc2c8);
}

.hint {
    padding-left: 2px;
    white-space: nowrap;
}

.slot {
    border-left: 1px solid #989ea4;
}
```
